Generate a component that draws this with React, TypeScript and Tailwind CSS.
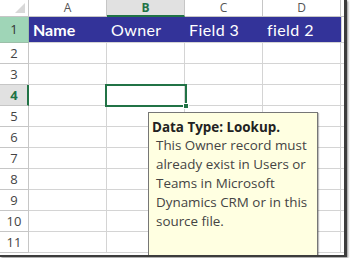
import React from 'react';

const cols = ['A', 'B', 'C', 'D'];
const headers = ['Name', 'Owner', 'Field 3', 'field 2'];
const rows = [2, 3, 4, 5, 6, 7, 8, 9, 10, 11];

const App: React.FC = () => {
  return (
    <div className="w-[350px] h-[258px] bg-white overflow-hidden">
      <div className="relative w-[347px] h-[257px] border-r-[3px] border-b-[2px] border-[#3c3c3c] shadow-[1px_1px_2px_rgba(0,0,0,0.45)] overflow-hidden bg-white font-['Open_Sans',sans-serif]">
        {/* column headers */}
        <div className="flex h-[17px]">
          <div className="relative w-[29px] shrink-0 border-r border-b border-[#c6c6c6] bg-white">
            <div className="absolute right-[3px] bottom-[3px] w-0 h-0 border-l-[10px] border-l-transparent border-b-[10px] border-b-[#d8d8d8]" />
          </div>
          {cols.map((c) =>
            c === 'B' ? (
              <div
                key={c}
                className="w-[78px] shrink-0 border-r border-[#c6c6c6] border-b-2 border-b-[#217346] bg-[#e1e1e1] text-[#217346] font-bold text-[12px] leading-[15px] text-center"
              >
                {c}
              </div>
            ) : (
              <div
                key={c}
                className="w-[78px] shrink-0 border-r border-b border-[#c6c6c6] bg-white text-[#555] text-[12px] leading-[16px] text-center"
              >
                {c}
              </div>
            )
          )}
          <div className="flex-1 border-b border-[#c6c6c6]" />
        </div>

        {/* row 1 */}
        <div className="flex h-[26px]">
          <div className="w-[29px] shrink-0 border-r border-b border-[#9bbfa8] bg-[#9fd5b7] text-[#333] text-[13px] leading-[25px] text-center">
            1
          </div>
          {headers.map((h, i) => (
            <div
              key={h}
              className={`w-[78px] shrink-0 bg-[#333399] border-b border-[#d4d4d4] text-white text-[16px] leading-[25px] pl-[4px] font-['Lato',sans-serif] ${i === 0 ? 'font-bold' : 'tracking-[0.4px]'}`}
            >
              {h}
            </div>
          ))}
          <div className="flex-1 border-l border-b border-[#d4d4d4]" />
        </div>

        {/* rows 2..11 */}
        {rows.map((r) => (
          <div key={r} className="flex h-[21px]">
            {r === 4 ? (
              <div className="w-[29px] shrink-0 border-r-2 border-r-[#217346] border-b border-[#c6c6c6] bg-[#e1e1e1] text-[#217346] font-bold text-[13px] leading-[20px] text-center pl-[1px]">
                {r}
              </div>
            ) : (
              <div className="w-[29px] shrink-0 border-r border-b border-[#c6c6c6] bg-white text-[#444] text-[13px] leading-[20px] text-center">
                {r}
              </div>
            )}
            {cols.map((c) => (
              <div key={c} className="w-[78px] shrink-0 border-r border-b border-[#d4d4d4]" />
            ))}
            <div className="flex-1 border-b border-[#d4d4d4]" />
          </div>
        ))}

        {/* selection box on B4 */}
        <div className="absolute left-[105px] top-[84px] w-[82px] h-[23px] border-2 border-[#217346]" />
        <div className="absolute left-[183px] top-[103px] w-[6px] h-[6px] bg-[#217346] border border-white" />

        {/* input message tooltip */}
        <div className="absolute left-[148px] top-[112px] w-[170px] h-[160px] bg-[#ffffe1] border border-[#767676] shadow-[1px_1px_1px_rgba(0,0,0,0.25)] text-[13.4px] pl-[3px] pt-[6px] font-['Open_Sans',sans-serif]">
          <div className="font-bold leading-[17px] text-[#222]">Data Type: Lookup.</div>
          <div className="leading-[19px] pl-[4px] text-[#444]">
            This Owner record must
            <br />
            already exist in Users or
            <br />
            Teams in Microsoft
            <br />
            Dynamics CRM or in this
            <br />
            source file.
          </div>
        </div>
      </div>
    </div>
  );
};

export default App;
